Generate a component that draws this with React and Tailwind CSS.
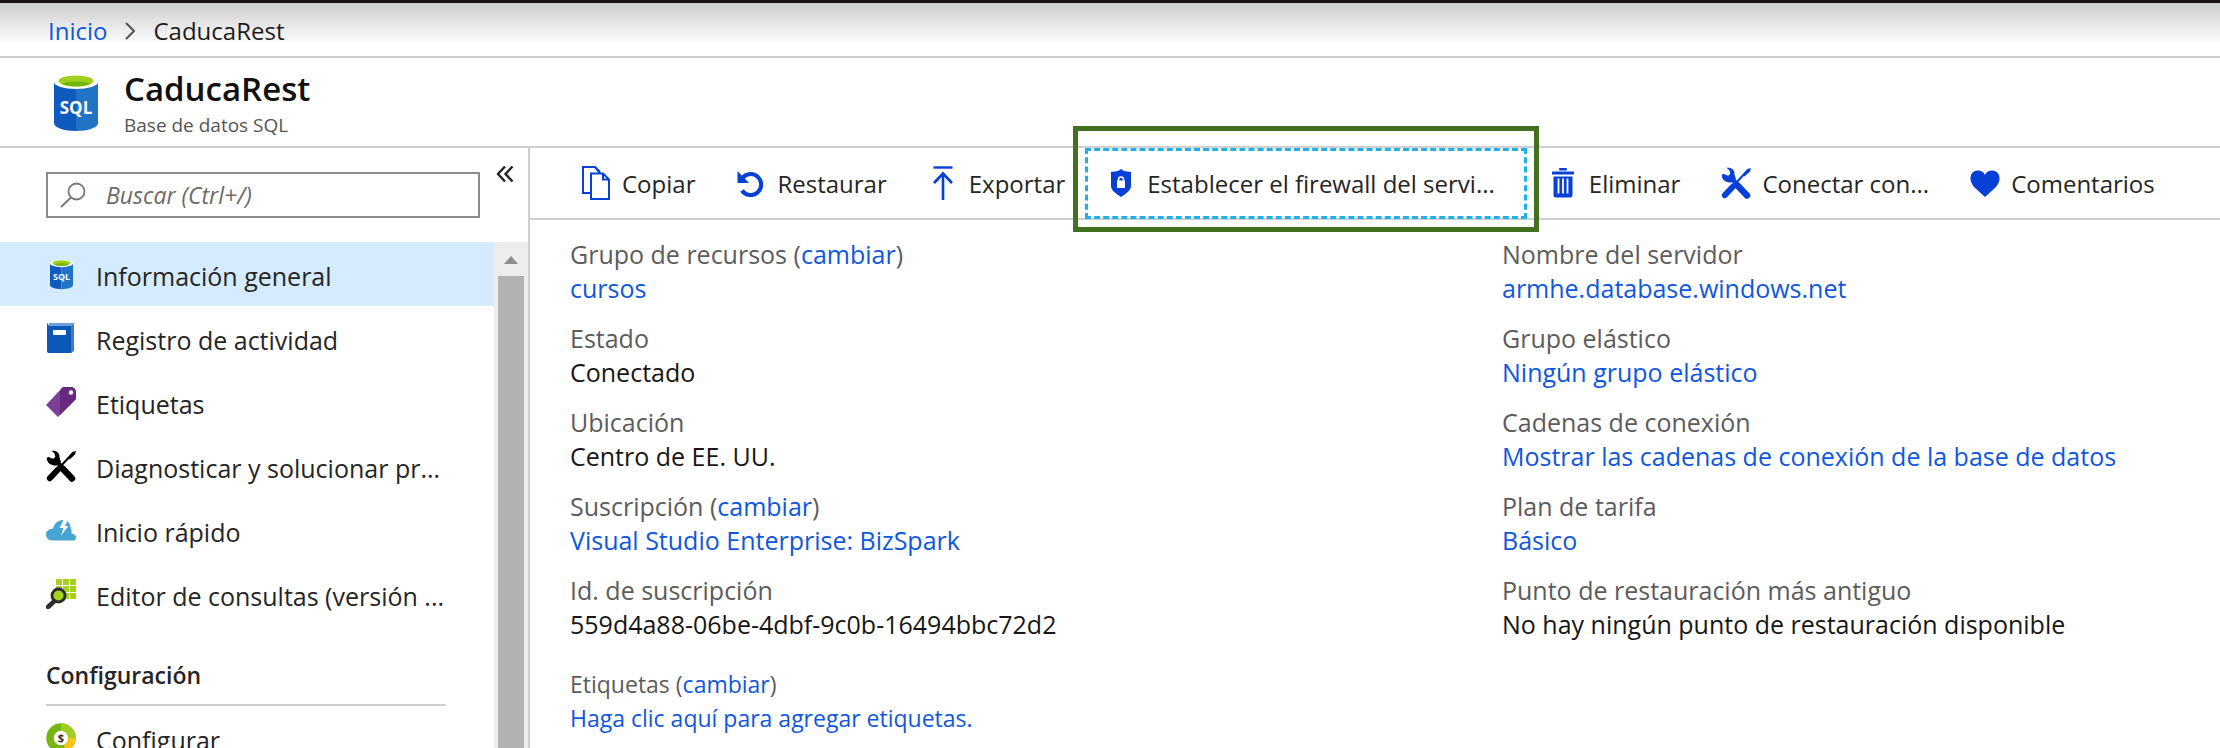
import React from "react";

const LINK = "text-[#0f57de] hover:underline";

/* ---------- icons ---------- */

function SqlIcon({ className }) {
  return (
    <svg viewBox="0 0 44 56" className={className} aria-hidden="true">
      <path d="M0 7v41c0 4.500 9.800 8 22 8V7z" fill="#0f5bbd" />
      <path d="M22 56c12.200 0 22-3.500 22-8V7H22z" fill="#2173c6" />
      <ellipse cx="22" cy="7" rx="22" ry="7" fill="#fff" />
      <ellipse cx="22" cy="6" rx="17.500" ry="5.500" fill="#a3cf1d" />
      <path d="M7.500 8.600C10.500 7.200 16 6.400 22 6.400s11.500.8 14.500 2.200C33.500 10.500 28 11.500 22 11.500S10.500 10.500 7.500 8.600z" fill="#72b508" />
      <text x="22" y="38.500" textAnchor="middle" fontSize="17" fontWeight="700" fill="#fff" fontFamily="Open Sans, sans-serif">
        SQL
      </text>
    </svg>
  );
}

function BookIcon() {
  return (
    <svg viewBox="0 0 30 32" className="h-8 w-[30px]" aria-hidden="true">
      <path d="M3 1h25v27l-3 3H3z" fill="#6d9fdc" />
      <path d="M25 4l3-2v27l-3 2z" fill="#3e7cc9" />
      <path d="M2 1Q1 1 1 3v26q0 2 2 2h22V4H4Q2 4 2 1z" fill="#0d57b9" />
      <rect x="7" y="8" width="13" height="5" rx="1" fill="#fff" />
    </svg>
  );
}

function TagIcon() {
  return (
    <svg viewBox="0 0 30 32" className="h-8 w-[30px]" aria-hidden="true">
      <path d="M17 1h9q3 1 4 4v8L12 31 0 19z" fill="#7a3f97" />
      <path d="M17 1h9q3 1 4 4v8L14 29V4z" fill="#68297f" />
      <circle cx="25" cy="6.500" r="2.200" fill="#fff" />
    </svg>
  );
}

function ToolsIcon({ className }) {
  return (
    <svg viewBox="0 0 30 32" className={className} fill="none" stroke="currentColor" aria-hidden="true">
      <path d="M17 19L26 28.500" strokeWidth="6.500" strokeLinecap="round" />
      <path d="M8 9L18 19" strokeWidth="4.500" />
      <path d="M5.500 0.800C10 0 14 2.500 13.500 7.500L15 12l-4.500 3.500C6 16 1 13.500 0.800 8.300L2 6.800l5 2L9.300 7 8.500 3.500z" fill="currentColor" stroke="none" />
      <path d="M3.800 28.300L12 19.500" strokeWidth="6" strokeLinecap="round" />
      <path d="M13 18L27 3" strokeWidth="2" />
      <path d="M22 8l4.500-6L30 1l-1 3.500-5.500 5z" fill="currentColor" stroke="none" />
    </svg>
  );
}

function CloudIcon() {
  return (
    <svg viewBox="0 0 30 22" className="h-[22px] w-[30px]" aria-hidden="true">
      <path d="M6 21.500C2 21.500 0 18.500 0 15.500c0-3.500 3-6 7-5.800C8 4.500 12 1 17 1c5 0 7.500 3.500 7.800 8.500 1.500 2.500.7 4 .7 5.200 3-.2 4.500 2 4.500 4 0 2-1.500 2.800-3 2.800z" fill="#48a5d3" />
      <path d="M18 0l-4.500 9h4L15 16.500 22.500 7h-3.700L22 1z" fill="#fff" />
    </svg>
  );
}

function QueryIcon() {
  return (
    <svg viewBox="0 0 30 30" className="h-[30px] w-[30px]" aria-hidden="true">
      <g fill="#a5d11f">
        <rect x="10" y="0" width="6" height="6" />
        <rect x="17" y="0" width="6" height="6" />
        <rect x="24" y="0" width="6" height="6" />
        <rect x="10" y="7" width="6" height="6" />
        <rect x="17" y="7" width="6" height="6" />
        <rect x="24" y="7" width="6" height="6" />
        <rect x="17" y="14" width="6" height="6" />
        <rect x="24" y="14" width="6" height="6" />
      </g>
      <path d="M2 28l6.500-6" stroke="#2b2b2b" strokeWidth="4.500" strokeLinecap="round" />
      <circle cx="12.500" cy="16.500" r="6.500" fill="#a5d11f" stroke="#2b2b2b" strokeWidth="2.800" />
    </svg>
  );
}

function PricingIcon() {
  return (
    <svg viewBox="0 0 30 30" className="h-[30px] w-[30px]" aria-hidden="true">
      <circle cx="15" cy="15" r="11" fill="#fff" stroke="#77b611" strokeWidth="7.500" />
      <path d="M15 4a11 11 0 0 1 11 11" fill="none" stroke="#a0cd22" strokeWidth="7.500" />
      <path d="M26 15a11 11 0 0 1-7 10.200" fill="none" stroke="#fcc419" strokeWidth="7.500" />
      <text x="15" y="19" textAnchor="middle" fontSize="11" fontWeight="700" fill="#333" fontFamily="Open Sans, sans-serif">
        $
      </text>
    </svg>
  );
}

function CopyIcon() {
  return (
    <svg viewBox="0 0 28 34" className="h-[34px] w-7" fill="none" stroke="currentColor" strokeWidth="2" aria-hidden="true">
      <path d="M8 27H1V1h12l5 5" />
      <path d="M9 7.500h12l6 6V33H9z" fill="#fff" />
      <path d="M13 1l5 6.500" />
      <path d="M21 7.500v6h6" />
    </svg>
  );
}

function RestoreIcon() {
  return (
    <svg viewBox="0 0 28 27" className="h-[27px] w-7" aria-hidden="true">
      <path d="M5.500 8A10.500 10.500 0 1 1 5 20.500" fill="none" stroke="currentColor" strokeWidth="4" />
      <path d="M0.500 1v12h11.500z" fill="currentColor" />
    </svg>
  );
}

function ExportIcon() {
  return (
    <svg viewBox="0 0 20 34" className="h-[34px] w-5" fill="none" stroke="currentColor" aria-hidden="true">
      <path d="M0.500 1.500h19" strokeWidth="2.400" />
      <path d="M10 8v26" strokeWidth="2.600" />
      <path d="M1 17l9-9.500 9 9.500" strokeWidth="2.600" />
    </svg>
  );
}

function ShieldIcon() {
  return (
    <svg viewBox="0 0 20 28" className="h-7 w-5" aria-hidden="true">
      <path d="M10 0l3 2 7 1v14c0 4-4 7-10 11C4 24 0 21 0 17V3l7-1z" fill="currentColor" />
      <rect x="6" y="11.500" width="8" height="7.500" fill="#fff" />
      <path d="M7.500 12v-1.500a2.500 2.500 0 0 1 5 0V12" fill="none" stroke="#fff" strokeWidth="1.500" />
    </svg>
  );
}

function TrashIcon() {
  return (
    <svg viewBox="0 0 22 30" className="h-[30px] w-[22px]" aria-hidden="true">
      <rect x="7" y="0" width="8" height="2.500" rx="1" fill="currentColor" />
      <rect x="0" y="3.500" width="22" height="3" fill="currentColor" />
      <path d="M1.500 8.500h19V27q0 2.500-2.500 2.500H4Q1.500 29.500 1.500 27z" fill="currentColor" />
      <path d="M6.500 10.500v15M11 10.500v15M15.500 10.500v15" stroke="#fff" strokeWidth="1.800" />
    </svg>
  );
}

function HeartIcon() {
  return (
    <svg viewBox="0 0 30 27" className="h-[27px] w-[30px]" aria-hidden="true">
      <path d="M15 27L4 17C-2 10 0 1 7.500 0.500 11 0.300 14 2 15 5c1-3 4-4.700 7.500-4.500C30 1 32 10 26 17z" fill="currentColor" />
    </svg>
  );
}

/* ---------- data ---------- */

const NAV = [
  { label: "Información general", icon: <SqlIcon className="h-[31px] w-[23px]" />, active: true },
  { label: "Registro de actividad", icon: <BookIcon /> },
  { label: "Etiquetas", icon: <TagIcon /> },
  { label: "Diagnosticar y solucionar pr...", icon: <ToolsIcon className="h-8 w-[30px] text-black" /> },
  { label: "Inicio rápido", icon: <CloudIcon /> },
  { label: "Editor de consultas (versión ...", icon: <QueryIcon /> },
];

const LEFT = [
  { label: "Grupo de recursos", change: true, value: "cursos", link: true },
  { label: "Estado", value: "Conectado" },
  { label: "Ubicación", value: "Centro de EE. UU." },
  { label: "Suscripción", change: true, value: "Visual Studio Enterprise: BizSpark", link: true },
  { label: "Id. de suscripción", value: "559d4a88-06be-4dbf-9c0b-16494bbc72d2" },
];

const RIGHT = [
  { label: "Nombre del servidor", value: "armhe.database.windows.net", link: true },
  { label: "Grupo elástico", value: "Ningún grupo elástico", link: true },
  { label: "Cadenas de conexión", value: "Mostrar las cadenas de conexión de la base de datos", link: true },
  { label: "Plan de tarifa", value: "Básico", link: true },
  { label: "Punto de restauración más antiguo", value: "No hay ningún punto de restauración disponible" },
];

/* ---------- pieces ---------- */

function Command({ icon, children, focused }) {
  return (
    <button
      type="button"
      className={
        focused
          ? "flex h-full shrink-0 items-center gap-[10px] pr-8 pl-5 text-[#252525]"
          : "flex h-full shrink-0 items-center gap-[10px] px-5 text-[#252525]"
      }
    >
      <span className="flex w-8 justify-center text-[#0640d6]">{icon}</span>
      <span className="pt-[2px]">{children}</span>
    </button>
  );
}

function Property({ label, change, value, link }) {
  return (
    <div>
      <dt className="text-[#5c5c5c]">
        {label}
        {change && (
          <>
            {" "}(<a href="#cambiar" className={LINK}>cambiar</a>)
          </>
        )}
      </dt>
      <dd className="text-[#161616]">{link ? <a href="#valor" className={LINK}>{value}</a> : value}</dd>
    </div>
  );
}

function NavItem({ label, icon, active }) {
  return (
    <li>
      <a
        href="#seccion"
        aria-current={active ? "page" : undefined}
        className={
          active
            ? "flex h-16 items-center gap-5 bg-[#d5ebff] pl-[46px] text-[#252525]"
            : "flex h-16 items-center gap-5 pl-[46px] text-[#252525]"
        }
      >
        <span className="flex w-[30px] shrink-0 justify-center">{icon}</span>
        <span className="pt-[3px] text-[25px] leading-8 whitespace-nowrap">{label}</span>
      </a>
    </li>
  );
}

export default function App() {
  return (
    <div className="flex h-screen flex-col overflow-hidden bg-white font-['Open_Sans','Noto_Sans',sans-serif] text-2xl">
      <nav
        aria-label="Ruta"
        className="flex h-[58px] shrink-0 items-center gap-[18px] border-t-[3px] border-b-2 border-t-[#171313] border-b-[#cfcfcf] bg-linear-to-b from-[#cdcdcd] to-white to-80% pt-[2px] pl-12"
      >
        <a href="#inicio" className={LINK}>Inicio</a>
        <svg viewBox="0 0 10 18" className="h-[18px] w-[10px]" fill="none" stroke="#555" strokeWidth="2" aria-hidden="true">
          <path d="M1 1l8 8-8 8" />
        </svg>
        <span className="text-[#1c1c1c]">CaducaRest</span>
      </nav>

      <header className="flex h-[90px] shrink-0 items-center border-b-2 border-[#cfcfcf] pt-px pl-[54px]">
        <SqlIcon className="h-14 w-11" />
        <div className="pt-1 pl-[26px]">
          <h1 className="text-[33px] leading-10 font-semibold text-[#111]">CaducaRest</h1>
          <p className="text-[19px] leading-8 text-[#555]">Base de datos SQL</p>
        </div>
      </header>

      <div className="flex min-h-0 flex-1">
        <aside className="flex w-[530px] shrink-0 flex-col overflow-hidden border-r-2 border-[#cfcfcf]">
          <div className="flex shrink-0 gap-4 py-6 pl-[46px]">
            <label className="flex h-[46px] w-[434px] items-center gap-5 border-2 border-[#8c8c8c] pl-3">
              <svg viewBox="0 0 26 26" className="h-[26px] w-[26px] shrink-0" fill="none" stroke="#777" strokeWidth="1.800" aria-hidden="true">
                <circle cx="16.500" cy="9.500" r="8" />
                <path d="M11 15.500L1 25" />
              </svg>
              <input
                type="text"
                aria-label="Buscar"
                placeholder="Buscar (Ctrl+/)"
                className="w-full min-w-0 text-[23px] text-[#333] italic outline-none placeholder:text-[#6a6a6a]"
              />
            </label>
            <button type="button" aria-label="Contraer menú" className="-mt-2 flex h-5 w-[18px] items-center text-[#222]">
              <svg viewBox="0 0 18 18" className="h-[18px] w-[18px]" fill="none" stroke="currentColor" strokeWidth="2.400" aria-hidden="true">
                <path d="M9 1.500L2 9l7 7.500M16.500 1.500L9.500 9l7 7.500" />
              </svg>
            </button>
          </div>

          <div className="flex min-h-0 flex-1">
            <div className="min-w-0 flex-1 overflow-hidden">
              <ul>
                {NAV.map((item) => (
                  <NavItem key={item.label} {...item} />
                ))}
              </ul>
              <h2 className="mr-12 ml-[46px] border-b-2 border-[#cfcfcf] pt-8 pb-3 text-[23px] leading-[34px] font-semibold text-[#252525]">
                Configuración
              </h2>
              <ul>
                <NavItem label="Configurar" icon={<PricingIcon />} />
              </ul>
            </div>
            <div className="flex w-[34px] flex-col items-center bg-[#ededed]" aria-hidden="true">
              <svg viewBox="0 0 14 8" className="mt-[14px] mb-3 h-2 w-[14px] shrink-0">
                <path d="M7 0l7 8H0z" fill="#8c8c8c" />
              </svg>
              <div className="w-[26px] flex-1 bg-[#b2b2b2]" />
            </div>
          </div>
        </aside>

        <main className="min-w-0 flex-1">
          <div role="toolbar" aria-label="Comandos" className="flex h-[72px] items-center border-b-2 border-[#cfcfcf] pl-[30px]">
            <Command icon={<CopyIcon />}>Copiar</Command>
            <Command icon={<RestoreIcon />}>Restaurar</Command>
            <Command icon={<ExportIcon />}>Exportar</Command>
            <div className="relative h-full shrink-0">
              <Command icon={<ShieldIcon />} focused>Establecer el firewall del servi...</Command>
              <div className="pointer-events-none absolute inset-x-0 top-0 -bottom-px border-[3px] border-dashed border-[#1fb0ea]" />
              <div className="pointer-events-none absolute -inset-x-3 -top-[22px] -bottom-[14px] border-[5px] border-[#41701f]" />
            </div>
            <Command icon={<TrashIcon />}>Eliminar</Command>
            <Command icon={<ToolsIcon className="h-8 w-[30px]" />}>Conectar con...</Command>
            <Command icon={<HeartIcon />}>Comentarios</Command>
          </div>

          <div className="grid grid-cols-[932px_1fr] pt-[17px] pl-10 text-[25px] leading-[34px]">
            <dl className="flex flex-col gap-4">
              {LEFT.map((p) => (
                <Property key={p.label} {...p} />
              ))}
            </dl>
            <dl className="flex flex-col gap-4">
              {RIGHT.map((p) => (
                <Property key={p.label} {...p} />
              ))}
            </dl>
          </div>
          <dl className="pt-[26px] pl-10 text-[23px] leading-[34px]">
            <Property label="Etiquetas" change value="Haga clic aquí para agregar etiquetas." link />
          </dl>
        </main>
      </div>
    </div>
  );
}
